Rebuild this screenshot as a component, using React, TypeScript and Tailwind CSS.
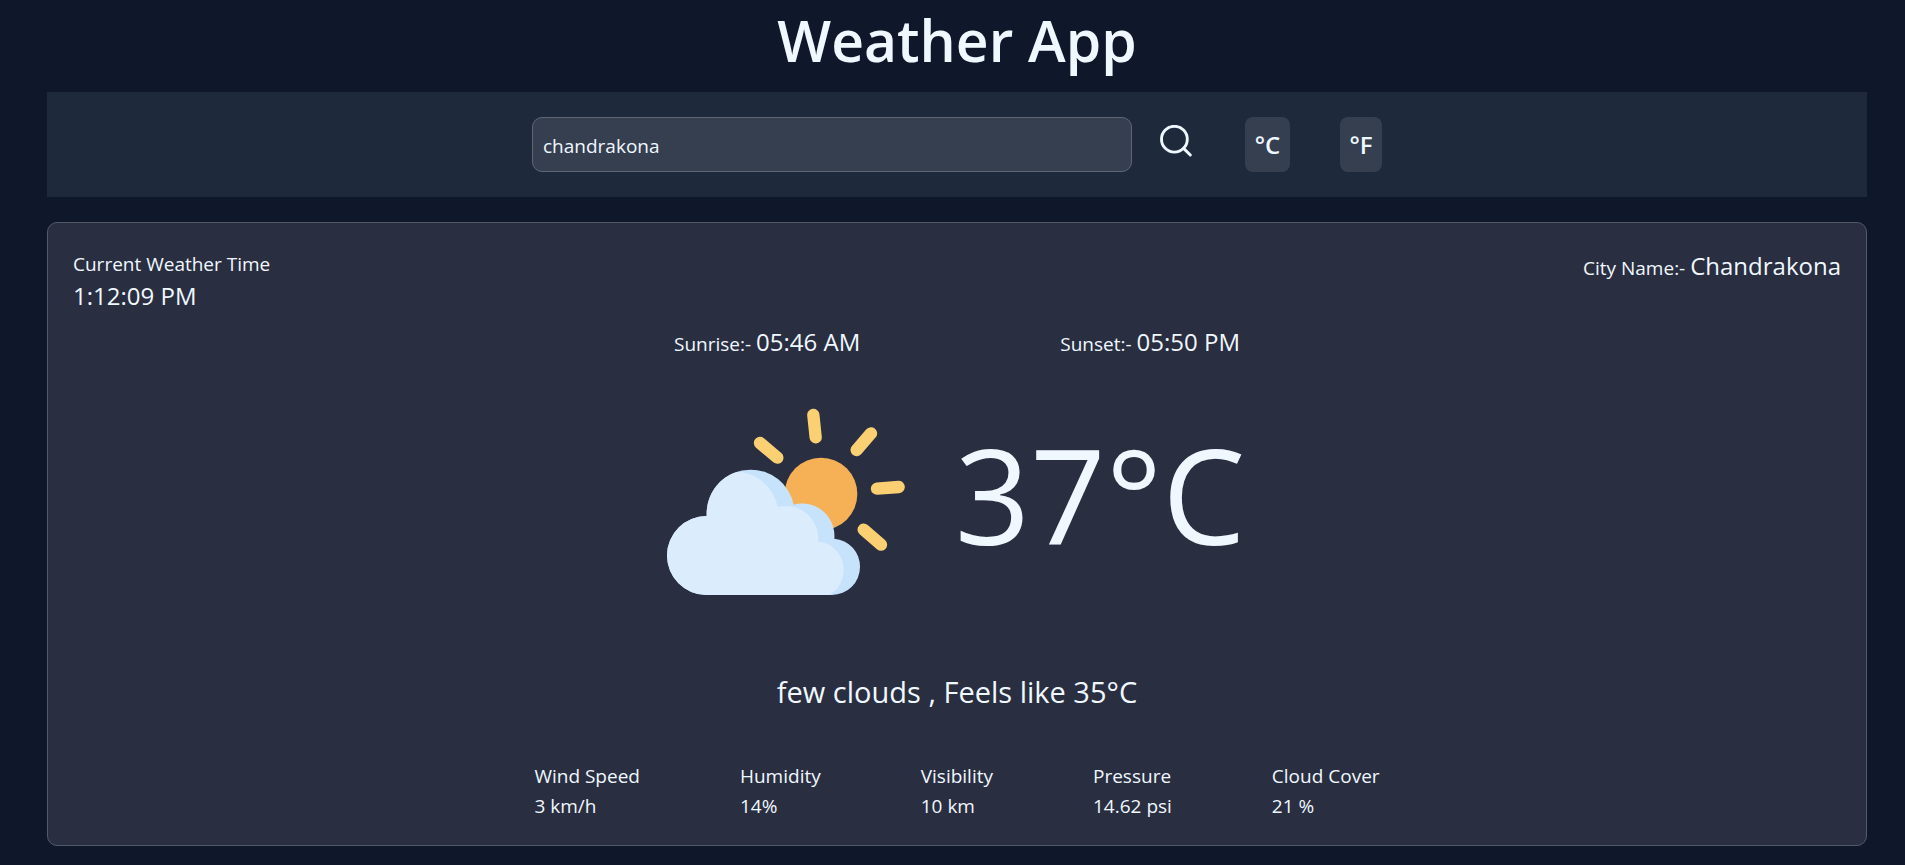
const stats = [
  { label: "Wind Speed", value: "3 km/h" },
  { label: "Humidity", value: "14%" },
  { label: "Visibility", value: "10 km" },
  { label: "Pressure", value: "14.62 psi" },
  { label: "Cloud Cover", value: "21 %" },
];

function SearchIcon() {
  return (
    <svg className="size-8" viewBox="0 0 32 32" fill="none" stroke="currentColor" strokeWidth="2.9" strokeLinecap="round" aria-hidden="true">
      <circle cx="14.4" cy="14.2" r="12.9" />
      <path d="M23.8 23.6 30.3 30" />
    </svg>
  );
}

function FewCloudsIcon() {
  return (
    <svg className="h-[250px] w-[260px] shrink-0" viewBox="0 -93 780 750" role="img" aria-label="few clouds">
      <circle cx="486" cy="282" r="109" fill="#f6b156" />
      <path
        d="M463 45 470 112M636 100 593 150M654 266 719 261M614 389 666 434M303 129 355 173"
        fill="none"
        stroke="#fad072"
        strokeWidth="37"
        strokeLinecap="round"
      />
      <path
        d="M142 585A118.5 118.5 0 0 1 143 348V340A131 131 0 0 1 274 209A131 131 0 0 1 404 314A97 97 0 0 1 526 416A84 84 0 0 1 603 501A84 84 0 0 1 519 585Z"
        fill="#c7e3fc"
      />
      <path
        d="M142 585A118.5 118.5 0 0 1 143 348V340A131 131 0 0 1 235 215A131 131 0 0 1 356 321A97 97 0 0 1 477 425A83 83 0 0 1 554 508A86 86 0 0 1 510 585Z"
        fill="#dbecfd"
      />
    </svg>
  );
}

function LabelledTime({ label, value }: { label: string; value: string }) {
  return (
    <p className="text-[19px] leading-[34px]">
      {label} <span className="text-2xl leading-[34px]">{value}</span>
    </p>
  );
}

export default function App() {
  return (
    <div className="min-h-screen bg-[#0f172a] pr-[38px] pb-[19px] pl-[47px] font-['Open_Sans','Noto_Sans',sans-serif] text-[#f0f8ff]">
      <h1 className="mb-3 text-center text-[57px] leading-[80px] font-semibold">Weather App</h1>

      <form className="flex flex-wrap items-stretch justify-center bg-[#1e2a3c] py-[25px]" onSubmit={(e) => e.preventDefault()}>
        <input
          type="text"
          aria-label="City"
          defaultValue="chandrakona"
          className="h-[55px] w-[600px] max-w-full rounded-[10px] border border-[#5f6775] bg-[#353f50] px-2.5 pt-0.5 text-[19px] outline-none"
        />
        <button type="submit" aria-label="Search" className="flex w-[63px] items-start justify-end pt-2 pr-[3px]">
          <SearchIcon />
        </button>
        <button type="button" className="ml-[50px] h-[55px] w-[45px] rounded-lg bg-[#353f50] text-center text-2xl font-semibold">
          °C
        </button>
        <button type="button" className="ml-[50px] h-[55px] w-[42px] rounded-lg bg-[#353f50] text-center text-2xl font-semibold">
          °F
        </button>
      </form>

      <main className="mt-[25px] rounded-[10px] border border-[#525a68] bg-[#292e40] px-[25px] pt-[26px] pb-6">
        <div className="flex justify-between">
          <div>
            <p className="text-[19px] leading-[30px]">Current Weather Time</p>
            <p className="text-2xl leading-[34px]">1:12:09 PM</p>
          </div>
          <LabelledTime label="City Name:-" value="Chandrakona" />
        </div>

        <div className="mt-3 flex justify-center gap-[200px]">
          <LabelledTime label="Sunrise:-" value="05:46 AM" />
          <LabelledTime label="Sunset:-" value="05:50 PM" />
        </div>

        <div className="mt-2 flex items-center justify-center gap-9 pr-2.5">
          <FewCloudsIcon />
          <p className="text-[132px] leading-[180px]">37°C</p>
        </div>

        <p className="mt-[53px] text-center text-[29px] leading-[40px]">few clouds , Feels like 35°C</p>

        <dl className="mt-[49px] flex flex-wrap justify-center gap-x-[100px] text-[19px] leading-[30px]">
          {stats.map((s) => (
            <div key={s.label}>
              <dt>{s.label}</dt>
              <dd>{s.value}</dd>
            </div>
          ))}
        </dl>
      </main>
    </div>
  );
}
